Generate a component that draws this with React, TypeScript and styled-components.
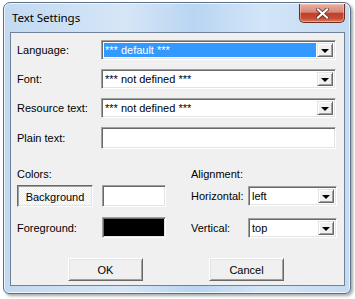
import React from "react";
import styled, { createGlobalStyle } from "styled-components";

const Global = createGlobalStyle`
  html, body { margin: 0; padding: 0; background: #ffffff; }
  body { font-family: "Liberation Sans", Arial, sans-serif; font-size: 11px; color: #000; }
`;

const Stage = styled.div`
  padding: 2px 0 0 3px;
  width: 355px;
  height: 299px;
  box-sizing: border-box;
`;

const Window = styled.div`
  width: 348px;
  height: 292px;
  box-sizing: border-box;
  border: 1px solid #5d7189;
  border-radius: 7px 7px 6px 6px;
  background: linear-gradient(90deg, #c2d9f1 0%, #d6e6f7 35%, #b9d5f2 55%, #d3e5f8 75%, #c4dbf2 100%);
  box-shadow: 2px 2px 3px rgba(0, 0, 0, 0.35), inset 0 0 0 1px rgba(255, 255, 255, 0.7);
  display: flex;
  flex-direction: column;
  padding: 0 5px 7px 6px;
`;

const TitleBar = styled.div`
  height: 29px;
  display: flex;
  align-items: flex-start;
  justify-content: space-between;
`;

const Title = styled.div`
  font-family: "Noto Sans", "Open Sans", sans-serif;
  font-size: 11.6px;
  color: #000;
  margin-top: 7px;
  margin-left: 2px;
  letter-spacing: -0.1px;
`;

const CloseButton = styled.div`
  width: 46px;
  height: 19px;
  margin-top: 1px;
  box-sizing: border-box;
  border: 1px solid #6e2c22;
  border-top: none;
  border-radius: 0 0 5px 5px;
  background: linear-gradient(180deg, #e8ada0 0%, #d88a7a 45%, #c0402a 52%, #c64a32 78%, #dd7e5e 100%);
  box-shadow: inset 0 0 0 1px rgba(255, 220, 210, 0.45);
  display: flex;
  align-items: center;
  justify-content: center;
`;

const Client = styled.div`
  flex: 1;
  border: 1px solid #6f8298;
  background: #f0f0f0;
  display: flex;
  flex-direction: column;
  padding: 7px 7px 0 6px;
`;

const FormGrid = styled.div`
  display: grid;
  grid-template-columns: 84px 235px;
  row-gap: 9px;
  align-items: center;
`;

const Label = styled.span`
  white-space: nowrap;
`;

const Sunken = styled.div<{ $h?: number; $bg?: string }>`
  height: ${(p) => p.$h ?? 20}px;
  box-sizing: border-box;
  border: 1px solid;
  border-color: #a0a0a0 #ffffff #ffffff #a0a0a0;
  box-shadow: inset 1px 1px 0 #696969, inset -1px -1px 0 #e3e3e3;
  background: ${(p) => p.$bg ?? "#ffffff"};
  display: flex;
  align-items: stretch;
`;

const ComboText = styled.div<{ $selected?: boolean }>`
  flex: 1;
  margin: 2px 1px 2px 2px;
  padding-left: 1px;
  display: flex;
  align-items: center;
  background: ${(p) => (p.$selected ? "#3399ff" : "transparent")};
  color: ${(p) => (p.$selected ? "#ffffff" : "#000000")};
  white-space: nowrap;
  overflow: hidden;
`;

const DropButton = styled.div`
  width: 16px;
  margin: 2px 2px 2px 0;
  box-sizing: border-box;
  background: #f0f0f0;
  border: 1px solid;
  border-color: #e3e3e3 #696969 #696969 #e3e3e3;
  box-shadow: inset 1px 1px 0 #ffffff, inset -1px -1px 0 #a0a0a0;
  display: flex;
  align-items: center;
  justify-content: center;
`;

const Arrow = styled.div`
  width: 0;
  height: 0;
  border-left: 4px solid transparent;
  border-right: 4px solid transparent;
  border-top: 4px solid #000;
  margin-top: 1px;
`;

const Combo: React.FC<{ value: string; selected?: boolean }> = ({ value, selected }) => (
  <Sunken>
    <ComboText $selected={selected}>{value}</ComboText>
    <DropButton>
      <Arrow />
    </DropButton>
  </Sunken>
);

const Lower = styled.div`
  display: grid;
  grid-template-columns: 174px 146px;
  margin-top: 19px;
`;

const Column = styled.div`
  display: flex;
  flex-direction: column;
`;

const SectionTitle = styled.div`
  margin-bottom: 4px;
  height: 13px;
`;

const ColorRow = styled.div<{ $mt?: number }>`
  display: grid;
  grid-template-columns: 85px 64px;
  align-items: center;
  margin-top: ${(p) => p.$mt ?? 0}px;
`;

const AlignRow = styled.div<{ $mt?: number }>`
  display: grid;
  grid-template-columns: 57px 89px;
  align-items: center;
  margin-top: ${(p) => p.$mt ?? 0}px;
`;

const PressedButton = styled.div`
  width: 76px;
  height: 22px;
  box-sizing: border-box;
  border: 1px solid;
  border-color: #696969 #ffffff #ffffff #696969;
  box-shadow: inset 1px 1px 0 #a0a0a0, inset -1px -1px 0 #e3e3e3;
  background-color: #f7f7f7;
  background-image: repeating-conic-gradient(#ffffff 0 25%, #ececec 0 50%);
  background-size: 2px 2px;
  display: flex;
  align-items: center;
  justify-content: center;
  padding-top: 1px;
`;

const Swatch = styled(Sunken)`
  width: 64px;
`;

const ButtonBar = styled.div`
  display: grid;
  grid-template-columns: 75px 75px;
  column-gap: 66px;
  margin-top: 20px;
  padding-left: 51px;
`;

const PushButton = styled.div`
  height: 23px;
  box-sizing: border-box;
  border: 1px solid;
  border-color: #ffffff #696969 #696969 #ffffff;
  box-shadow: inset 1px 1px 0 #e3e3e3, inset -1px -1px 0 #a0a0a0;
  background: #f0f0f0;
  display: flex;
  align-items: center;
  justify-content: center;
`;

export default function App() {
  return (
    <>
      <Global />
      <Stage>
        <Window>
          <TitleBar>
            <Title>Text Settings</Title>
            <CloseButton>
              <svg width="13" height="11" viewBox="0 0 13 11">
                <path d="M2 1.5 L11 9.5 M11 1.5 L2 9.5" stroke="#5a2418" strokeWidth="3.6" strokeLinecap="square" />
                <path d="M2 1.5 L11 9.5 M11 1.5 L2 9.5" stroke="#ffffff" strokeWidth="2.2" strokeLinecap="square" />
              </svg>
            </CloseButton>
          </TitleBar>
          <Client>
            <FormGrid>
              <Label>Language:</Label>
              <Combo value="*** default ***" selected />
              <Label>Font:</Label>
              <Combo value="*** not defined ***" />
              <Label>Resource text:</Label>
              <Combo value="*** not defined ***" />
              <Label>Plain text:</Label>
              <Sunken $h={22} />
            </FormGrid>
            <Lower>
              <Column>
                <SectionTitle>Colors:</SectionTitle>
                <ColorRow>
                  <PressedButton>Background</PressedButton>
                  <Swatch $h={22} />
                </ColorRow>
                <ColorRow $mt={10}>
                  <Label>Foreground:</Label>
                  <Swatch $h={21} $bg="#000000" />
                </ColorRow>
              </Column>
              <Column>
                <SectionTitle>Alignment:</SectionTitle>
                <AlignRow $mt={1}>
                  <Label>Horizontal:</Label>
                  <Combo value="left" />
                </AlignRow>
                <AlignRow $mt={12}>
                  <Label>Vertical:</Label>
                  <Combo value="top" />
                </AlignRow>
              </Column>
            </Lower>
            <ButtonBar>
              <PushButton>OK</PushButton>
              <PushButton>Cancel</PushButton>
            </ButtonBar>
          </Client>
        </Window>
      </Stage>
    </>
  );
}
